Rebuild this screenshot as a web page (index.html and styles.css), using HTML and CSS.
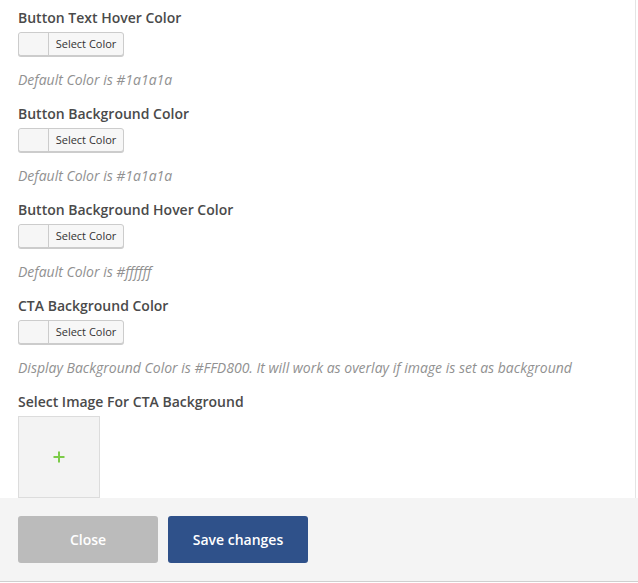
FILE: index.html
```html
<!DOCTYPE html>
<html>
<head>
<meta charset="utf-8">
<link rel="stylesheet" href="styles.css">
</head>
<body>
<div class="modal">
  <div class="modal-body">
    <div class="field">
      <div class="label">Button Text Hover Color</div>
      <div class="picker"><span class="swatch"></span><span class="pick-text">Select Color</span></div>
      <div class="desc">Default Color is #1a1a1a</div>
    </div>
    <div class="field">
      <div class="label">Button Background Color</div>
      <div class="picker"><span class="swatch"></span><span class="pick-text">Select Color</span></div>
      <div class="desc">Default Color is #1a1a1a</div>
    </div>
    <div class="field">
      <div class="label">Button Background Hover Color</div>
      <div class="picker"><span class="swatch"></span><span class="pick-text">Select Color</span></div>
      <div class="desc">Default Color is #ffffff</div>
    </div>
    <div class="field">
      <div class="label">CTA Background Color</div>
      <div class="picker"><span class="swatch"></span><span class="pick-text">Select Color</span></div>
      <div class="desc">Display Background Color is #FFD800. It will work as overlay if image is set as background</div>
    </div>
    <div class="field">
      <div class="label">Select Image For CTA Background</div>
      <div class="image-box">
        <svg width="12" height="12" viewBox="0 0 12 12"><path d="M6 0.5v11M0.5 6h11" stroke="#7ccb48" stroke-width="2"/></svg>
      </div>
    </div>
  </div>
  <div class="modal-footer">
    <button class="btn btn-close">Close</button>
    <button class="btn btn-save">Save changes</button>
  </div>
</div>
</body>
</html>
```
FILE: styles.css
```css
* { box-sizing: border-box; }
html, body { margin: 0; padding: 0; background: #fff; }
body { font-family: "Open Sans", "Liberation Sans", sans-serif; width: 638px; height: 583px; overflow: hidden; }
.modal { display: flex; flex-direction: column; }
.modal-body {
  width: 636px;
  height: 498px;
  overflow: hidden;
  border-right: 1px solid #e4e4e4;
  padding: 8px 0 0 18px;
}
.field { height: 96px; }
.label {
  font-size: 14px;
  font-weight: 600;
  line-height: 20px;
  color: #4a4a4a;
}
.picker {
  margin-top: 4px;
  display: flex;
  width: 106px;
  height: 24px;
  border: 1px solid #ccc;
  border-radius: 3px;
  background: #f7f7f7;
  box-shadow: 0 1px 0 #ccc;
}
.swatch { width: 30px; border-right: 1px solid #ccc; background: #f6f6f6; border-radius: 3px 0 0 3px; }
.pick-text {
  flex: 1;
  font-size: 11px;
  line-height: 22px;
  color: #333;
  text-align: center;
}
.desc {
  margin-top: 14px;
  font-size: 14px;
  font-style: italic;
  line-height: 20px;
  color: #919191;
}
.image-box {
  margin-top: 4px;
  width: 82px;
  height: 82px;
  background: #f3f3f3;
  border: 1px solid #dcdcdc;
  display: flex;
  align-items: center;
  justify-content: center;
}
.modal-footer {
  height: 84px;
  background: #f4f4f4;
  border-bottom: 1px solid #cfcfcf;
  padding: 18px 0 0 18px;
  display: flex;
  align-items: flex-start;
  gap: 10px;
}
.btn {
  width: 140px;
  height: 47px;
  border: none;
  border-radius: 3px;
  font-family: "Open Sans", "Liberation Sans", sans-serif;
  font-size: 14px;
  font-weight: 600;
  color: #fff;
  padding: 0;
}
.btn-close { background: #bbbbbb; }
.btn-save { background: #2f518a; }
```
